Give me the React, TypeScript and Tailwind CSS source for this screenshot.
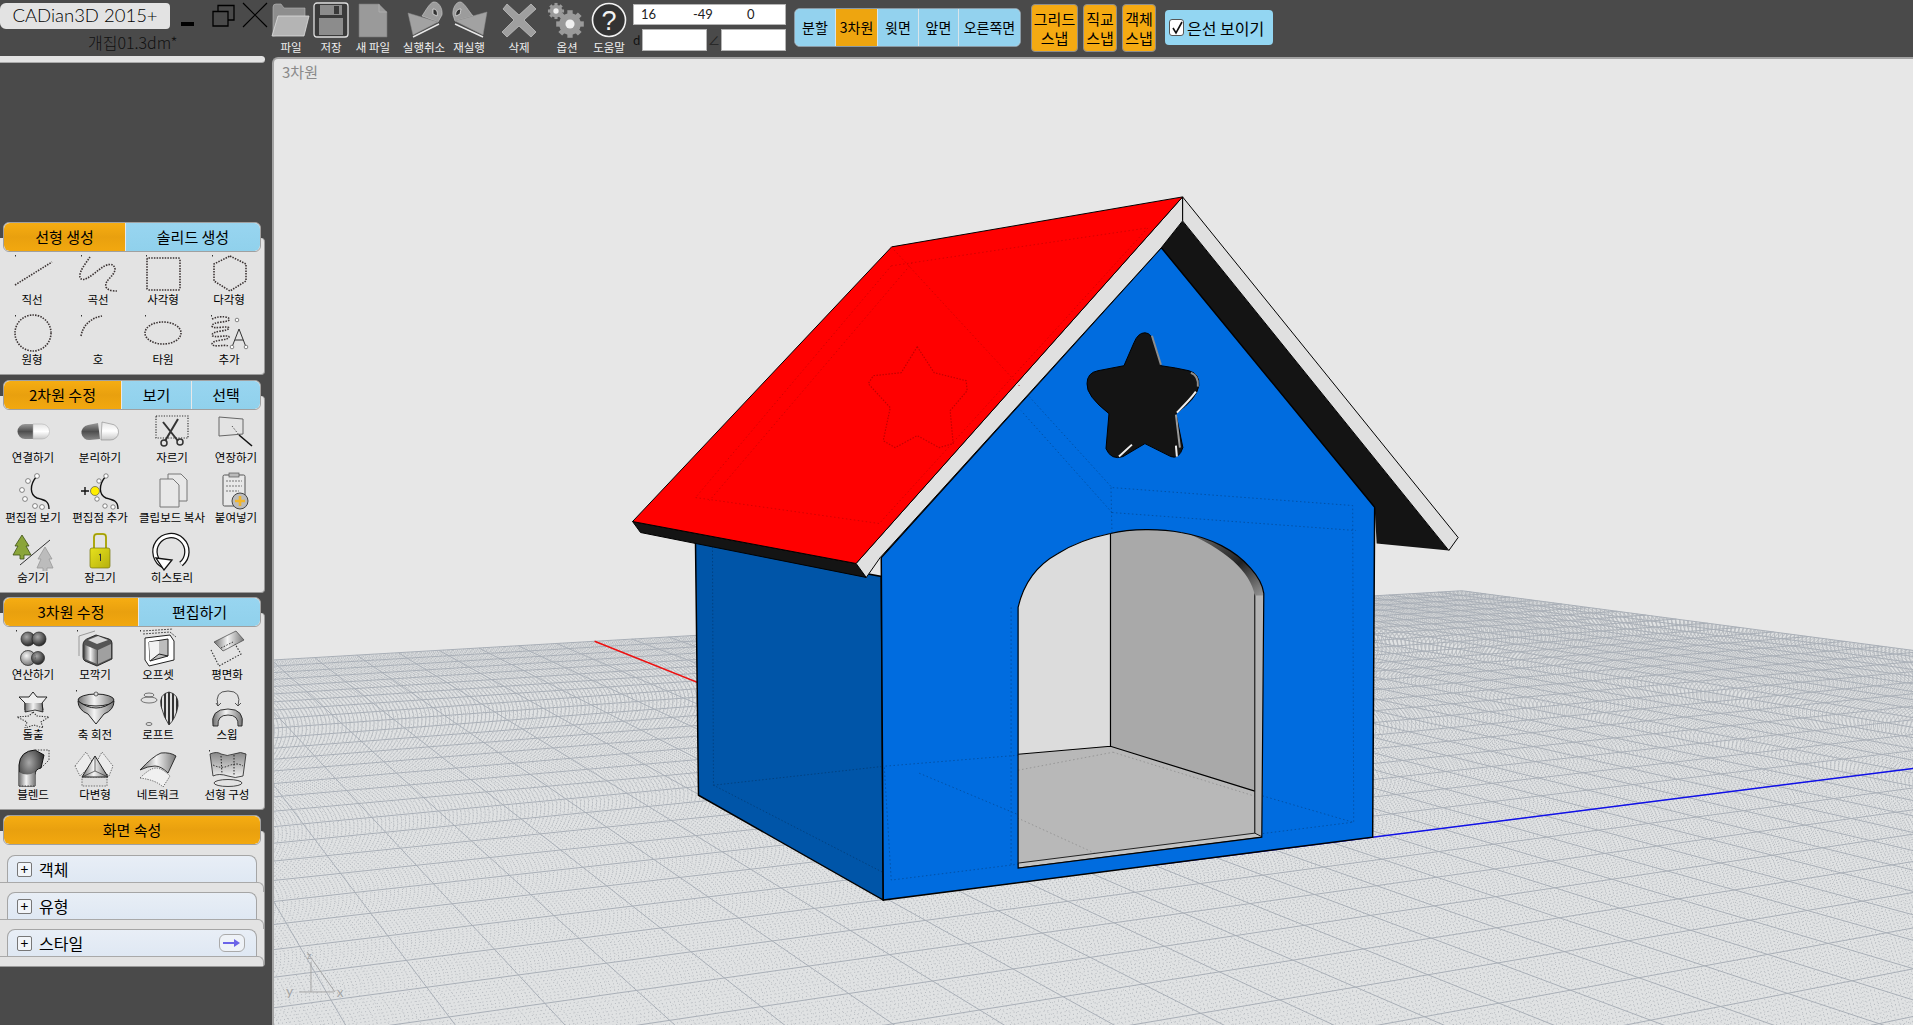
import type { ReactNode } from "react";

const O = [1153, 865];
const VA = [-24, 394];
const VB = [4865, 392];
const U = 29;
const V = 24;
const kB = U * 2.055;
const kA = V * 1.1018;

function project(u: number, v: number) {
  const a = u / kB;
  const b = v / kA;
  const w = 1 + a + b;
  return [(O[0] + a * VB[0] + b * VA[0]) / w, (O[1] + a * VB[1] + b * VA[1]) / w];
}

function seg(p: number[], q: number[]) {
  return `M${p[0].toFixed(1)} ${p[1].toFixed(1)}L${q[0].toFixed(1)} ${q[1].toFixed(1)}`;
}

function gridPath(step: number, skipMajor: boolean) {
  let d = "";
  const count = Math.round((U * 2) / step);
  for (let i = 0; i <= count; i++) {
    const u = -U + i * step;
    if (skipMajor && Math.abs(u - Math.round(u)) < 0.001) continue;
    const vMin = Math.max(-V, (0.3 - 1 - u / kB) * kA);
    if (vMin < V) d += seg(project(u, vMin), project(u, V));
  }
  const countV = Math.round((V * 2) / step);
  for (let i = 0; i <= countV; i++) {
    const v = -V + i * step;
    if (skipMajor && Math.abs(v - Math.round(v)) < 0.001) continue;
    const uMin = Math.max(-U, (0.3 - 1 - v / kA) * kB);
    if (uMin < U) d += seg(project(uMin, v), project(U, v));
  }
  return d;
}

function pts(list: number[][]) {
  return list.map((p) => p.join(",")).join(" ");
}

const STAR =
  "M1144 332Q1151 332 1154 345L1160 365Q1175 367 1188 370Q1199 373 1198 385Q1196 398 1175 413L1182 447Q1178 459 1170 456L1144 443L1122 456Q1110 460 1105 448L1108 413Q1085 395 1086 383Q1086 372 1097 370L1123 365L1133 342Q1137 332 1144 332Z";
const DOOR =
  "M1017 607C1022 585 1035 565 1057 553C1073 543 1090 537 1109.5 533C1130 528 1160 528 1180 532C1210 537 1235 550 1250 568C1258 577 1262 585 1263 593L1261 837L1017 868Z";

function Viewport() {
  const far = project(U, V);
  const left = project(-U, V);
  const right = project(U, -4);
  const redEnd = project(0, V);
  const blueEnd = project(U, 0);
  return (
    <svg viewBox="272 58 1641 967" className="block w-full h-full">
      <defs>
        <clipPath id="door">
          <path d={DOOR} />
        </clipPath>
        <linearGradient id="archLip" x1="0" y1="0" x2="1" y2="1">
          <stop offset="0" stopColor="#777" />
          <stop offset="0.6" stopColor="#222" />
          <stop offset="1" stopColor="#999" />
        </linearGradient>
      </defs>
      <polygon points={pts([far, left, [left[0], 1100], [2200, 1100], right])} fill="#e0e2e3" />
      <path d={gridPath(0.1, true)} stroke="#b6babf" strokeWidth="1" strokeDasharray="1 3" fill="none" />
      <path d={gridPath(1, false)} stroke="#a9afb7" strokeWidth="1" fill="none" />
      <path d={seg(redEnd, O)} stroke="#f01010" strokeWidth="1.5" />
      <path d={seg(O, blueEnd)} stroke="#1010e8" strokeWidth="1.5" />

      {/* side wall */}
      <polygon points="694,541 697,795 882,900 880,576" fill="#0055a8" stroke="#000" strokeWidth="1.5" />
      <path d="M711 543L712 785L883 873M712 785L883 766" stroke="#00386f" strokeWidth="0.7" strokeDasharray="1.5 2" fill="none" />

      {/* roof underside, right */}
      <polygon points="1181.7,220 1448.3,550 1376,543 1374,507 1160,247" fill="#141414" />
      <polygon points="1181.7,196 1457.6,537 1448.3,550 1181.7,220" fill="#e0e0e0" stroke="#000" strokeWidth="1" />

      {/* front wall */}
      <polygon points="1160.3,246.7 1374,506.7 1372,837 882,900 880,557" fill="#006cdf" stroke="#000" strokeWidth="1.5" />
      <path
        d="M1020 387L1111 487L1352 505L1353 822L890 880L883 766L1017 755M1111 512L1355 530M1110 487L1111 533M1112 752L1352 822M918 773L1109 853M1010 607L1010 867M1111 512L1020 410"
        stroke="#034a98"
        strokeWidth="0.8"
        strokeDasharray="1.5 2.5"
        fill="none"
      />

      {/* doorway */}
      <g clipPath="url(#door)">
        <rect x="1017" y="520" width="93" height="360" fill="#dcdcdc" />
        <rect x="1109.5" y="520" width="160" height="360" fill="#a9a9a9" />
        <polygon points="1017,754 1109.5,746 1254,791 1254,840 1017,870" fill="#b8b8b8" />
        <path d="M1017 754L1109.5 746L1254 791M1109.5 533L1109.5 746" stroke="#000" strokeWidth="1.2" fill="none" />
        <path d="M1112 752L1254 796M1017 770L1112 752M918 773L1109 860" stroke="#8e8e8e" strokeWidth="0.8" strokeDasharray="1.5 2.5" fill="none" />
        <rect x="1254" y="590" width="10" height="250" fill="#b4b4b4" />
        <path d="M1254 593L1254 835" stroke="#000" strokeWidth="1" />
        <polygon points="1017,863 1254,833 1262,837 1017,868" fill="#c4c4c4" stroke="#222" strokeWidth="1" />
        <path d="M1180 530C1212 537 1237 550 1252 568C1260 577 1264 585 1265 595L1254 595C1250 572 1225 548 1180 530Z" fill="url(#archLip)" />
      </g>
      <path d={DOOR} fill="none" stroke="#000" strokeWidth="1.2" />

      {/* star opening */}
      <path d={STAR} fill="#141414" stroke="#000" strokeWidth="1" />
      <path d="M1151 335L1160 364M1190 372Q1198 375 1197 386" stroke="#8d8d8d" strokeWidth="2" fill="none" />
      <path d="M1195 391Q1190 398 1176 412M1131 444L1118 456M1175 445L1176 456" stroke="#eeeeee" strokeWidth="2" fill="none" />
      <path d="M1175 414L1179 447" stroke="#999" strokeWidth="2" fill="none" />

      {/* roof */}
      <polygon points="631,521 639,532 865,577 854.8,563" fill="#141414" stroke="#000" strokeWidth="1" />
      <polygon points="1181.7,196 1181.7,220 1160.3,247 879,557 865,577 854.8,563" fill="#e0e0e0" stroke="#000" strokeWidth="1" />
      <polygon points="1181.7,196 890.4,246 631,521 854.8,563" fill="#ff0000" stroke="#000" strokeWidth="1" />
      <path
        d="M890 265L1147 227L878 523L694 497ZM911 262L708 500M890 246L1020 387"
        stroke="#c80000"
        strokeWidth="0.8"
        strokeDasharray="1.5 2.5"
        fill="none"
      />
      <path
        d="M916 346L933 372L965 380L966 390L949 410L952 443L938 447L916 435L894 447L882 440L889 407L867 383L872 375L900 372Z"
        stroke="#c00000"
        strokeWidth="1.2"
        strokeDasharray="1.5 1.5"
        strokeLinejoin="round"
        fill="none"
      />

      {/* axis gizmo */}
      <path d="M309 962L309 992M297 992L332 992M305 952L333 992" stroke="#a5a5a5" strokeWidth="1" fill="none" />
      <text x="284" y="996" fontSize="14" fill="#a5a5a5" fontFamily="Lato, sans-serif">y</text>
      <text x="335" y="997" fontSize="13" fill="#a5a5a5" fontFamily="Lato, sans-serif">x</text>
      <text x="305" y="959" fontSize="10" fill="#a5a5a5" fontFamily="Lato, sans-serif">z</text>
    </svg>
  );
}

function Icon({ children }: { children: ReactNode }) {
  return (
    <svg viewBox="0 0 60 40" className="block w-[60px] h-[40px] shrink-0">
      {children}
    </svg>
  );
}

function Dotted({ children }: { children: ReactNode }) {
  return (
    <g fill="none" stroke="#3c3434" strokeWidth="1.6" strokeDasharray="1.5 1.2">
      {children}
    </g>
  );
}

function Tick({ x, y }: { x: number; y: number }) {
  return <rect x={x} y={y} width="1" height="1.5" fill="#333" />;
}

function Sphere({ cx, cy, r, fill = "url(#gSphere)" }: { cx: number; cy: number; r: number; fill?: string }) {
  return <circle cx={cx} cy={cy} r={r} fill={fill} stroke="#222" strokeWidth="0.7" />;
}

const line2 = (
  <Icon>
    <Tick x={13} y={2} />
    <Dotted>
      <path d="M13 32L50 9" />
    </Dotted>
  </Icon>
);
const curve = (
  <Icon>
    <Tick x={13} y={2} />
    <Dotted>
      <path d="M22 4C18 10 11 18 12 24C14 31 24 22 32 16C38 11 46 9 47 16C47 23 36 27 38 34C40 38 46 38 49 38" />
    </Dotted>
  </Icon>
);
const rectIcon = (
  <Icon>
    <Tick x={13} y={2} />
    <Dotted>
      <rect x="14" y="5" width="33" height="32" rx="1.5" />
    </Dotted>
  </Icon>
);
const polygonIcon = (
  <Icon>
    <Tick x={13} y={2} />
    <Dotted>
      <polygon points="31,3 47,11 47,28 31,38 15,28 15,11" />
    </Dotted>
  </Icon>
);
const circleIcon = (
  <Icon>
    <Tick x={13} y={2} />
    <Dotted>
      <circle cx="31" cy="20" r="18" />
    </Dotted>
  </Icon>
);
const arcIcon = (
  <Icon>
    <Tick x={13} y={2} />
    <Dotted>
      <path d="M13 23C15 12 23 5 34 3" />
    </Dotted>
  </Icon>
);
const ellipseIcon = (
  <Icon>
    <Tick x={12} y={2} />
    <Dotted>
      <ellipse cx="30" cy="20" rx="18" ry="11" />
    </Dotted>
  </Icon>
);
const addIcon = (
  <Icon>
    <Tick x={12} y={2} />
    <Dotted>
      <path d="M13 6C22 2 32 4 30 7C27 10 14 8 13 13C14 17 29 12 30 15C29 19 14 17 13 22C14 26 29 21 30 24C29 28 14 26 13 31C14 35 26 31 29 33" />
    </Dotted>
    <path d="M40 16L33 34M40 16L47 34M36 27L44 27" stroke="#333" strokeWidth="1" fill="none" />
    <circle cx="38" cy="7" r="1.8" fill="#fff" stroke="#555" strokeWidth="0.7" />
    <circle cx="33" cy="34" r="1.8" fill="#fff" stroke="#555" strokeWidth="0.7" />
    <circle cx="47" cy="34" r="1.8" fill="#fff" stroke="#555" strokeWidth="0.7" />
  </Icon>
);

const joinIcon = (
  <Icon>
    <path d="M30 13L22 13A7.5 7.5 0 0 0 22 28L30 28Z" fill="url(#gPillDark)" />
    <path d="M30 13L39 13A7.5 7.5 0 0 1 39 28L30 28Z" fill="url(#gPillLight)" stroke="#aaa" strokeWidth="0.5" />
  </Icon>
);
const splitIcon = (
  <Icon>
    <path d="M28 12L18 14A7.5 7.5 0 0 0 20 29L30 28Z" fill="url(#gPillDark)" />
    <path d="M32 11L41 13A7.5 7.5 0 0 1 40 29L31 29Z" fill="url(#gPillLight)" stroke="#888" strokeWidth="0.6" />
  </Icon>
);
const cutIcon = (
  <Icon>
    <rect x="14" y="5" width="32" height="22" fill="none" stroke="#333" strokeWidth="1.2" strokeDasharray="1.2 1.4" />
    <path d="M36 8L23 30M21 11L36 30" stroke="#333" strokeWidth="2" fill="none" />
    <circle cx="22" cy="32" r="3" fill="none" stroke="#333" strokeWidth="1.5" />
    <circle cx="38" cy="31" r="3" fill="none" stroke="#333" strokeWidth="1.5" />
  </Icon>
);
const extendIcon = (
  <Icon>
    <path d="M13 6L37 8L37 23L13 25Z" fill="none" stroke="#666" strokeWidth="1" />
    <path d="M26 15L33 24" stroke="#555" strokeWidth="1" strokeDasharray="1.5 1.5" />
    <path d="M33 24L46 35" stroke="#111" strokeWidth="1.6" />
  </Icon>
);
const viewPtsIcon = (
  <Icon>
    <path d="M34 5C26 14 27 24 34 27C42 29 46 30 46 38" fill="none" stroke="#111" strokeWidth="1.4" />
    {[
      [34, 5],
      [25, 10],
      [19, 19],
      [22, 28],
      [32, 35],
      [39, 36],
    ].map(([cx, cy]) => (
      <circle key={cx} cx={cx} cy={cy} r="2.4" fill="#fff" stroke="#555" strokeWidth="0.7" />
    ))}
  </Icon>
);
const addPtIcon = (
  <Icon>
    <g transform="translate(2 0)">
      <path d="M34 5C26 14 27 24 34 27C42 29 46 30 46 38" fill="none" stroke="#111" strokeWidth="1.4" />
      {[
        [34, 5],
        [27, 10],
        [25, 28],
        [33, 35],
        [41, 36],
      ].map(([cx, cy]) => (
        <circle key={cx} cx={cx} cy={cy} r="2.2" fill="#fff" stroke="#555" strokeWidth="0.7" />
      ))}
    </g>
    <path d="M11 20L19 20M15 16L15 24" stroke="#111" strokeWidth="1.4" />
    <circle cx="25" cy="20" r="4.5" fill="#ffee00" stroke="#555" strokeWidth="0.7" />
  </Icon>
);
const copyIcon = (
  <Icon>
    <path d="M26 3L39 3L45 9L45 30L26 30Z" fill="#e8e8e8" stroke="#777" strokeWidth="1" />
    <path d="M18 8L31 8L37 14L37 36L18 36Z" fill="#e8e8e8" stroke="#777" strokeWidth="1" />
  </Icon>
);
const pasteIcon = (
  <Icon>
    <rect x="17" y="4" width="22" height="31" rx="1.5" fill="#e8e8e8" stroke="#555" strokeWidth="1" />
    <rect x="23" y="2" width="10" height="4" fill="#bbb" stroke="#555" strokeWidth="0.7" />
    <path d="M20 10L36 10M20 15L36 15M20 20L33 20" stroke="#777" strokeWidth="1" strokeDasharray="2 1" />
    <circle cx="34" cy="30" r="8" fill="#bbb" stroke="#444" strokeWidth="1" />
    <path d="M34 25L34 35M29 30L39 30" stroke="#f2b62b" strokeWidth="2.6" />
  </Icon>
);
const hideIcon = (
  <Icon>
    <polygon points="19,4 26,15 23,15 28,24 21,24 21,28 17,28 17,24 10,24 15,15 12,15" fill="#8aa53a" stroke="#3d5015" strokeWidth="0.8" />
    <polygon points="42,16 49,28 46,28 50,37 44,37 44,42 40,42 40,37 34,37 38,28 35,28" fill="#bcbcbc" stroke="#999" strokeWidth="0.8" />
    <path d="M17 34L47 9" stroke="#333" strokeWidth="1" />
  </Icon>
);
const lockIcon = (
  <Icon>
    <path d="M24 18L24 6Q24 3 27 3L33 3Q36 3 36 6L36 18" fill="none" stroke="#c2bd14" strokeWidth="2" />
    <path d="M24 18L24 6Q24 3 27 3L33 3Q36 3 36 6L36 18" fill="none" stroke="#6a6710" strokeWidth="0.5" />
    <rect x="20" y="17" width="20" height="20" rx="2" fill="url(#gLock)" stroke="#77750e" strokeWidth="0.7" />
    <path d="M29 24L30.5 23L30.5 30" stroke="#333" strokeWidth="1" fill="none" />
  </Icon>
);
const historyIcon = (
  <Icon>
    <path d="M22 35A16 16 0 1 1 39 33" fill="none" stroke="#111" strokeWidth="5.5" />
    <path d="M22 35A16 16 0 1 1 39 33" fill="none" stroke="#fff" strokeWidth="3" />
    <polygon points="14,27 30,29 22,39" fill="#fff" stroke="#111" strokeWidth="1.3" />
  </Icon>
);

const booleanIcon = (
  <Icon>
    <Tick x={13} y={2} />
    <Sphere cx={25} cy={11} r={7} fill="url(#gDarkSphere)" />
    <Sphere cx={36} cy={11} r={7} fill="url(#gDarkSphere)" />
    <Sphere cx={25} cy={30} r={7.5} />
    <Sphere cx={35} cy={30} r={6.5} fill="url(#gDarkSphere)" />
    <circle cx="25" cy="30" r="7.5" fill="none" stroke="#555" strokeWidth="0.6" strokeDasharray="1 1" />
  </Icon>
);
const filletIcon = (
  <Icon>
    <Tick x={12} y={2} />
    <path d="M14 8L30 3M14 8L14 28" stroke="#999" strokeWidth="1" fill="none" />
    <path d="M18 17Q18 12 24 10L31 7L44 11Q47 12 47 15L47 31L32 38L20 33Q18 32 18 29Z" fill="#555" stroke="#222" strokeWidth="0.9" />
    <path d="M20 17L32 22L32 36L20 31Z" fill="url(#gMetal)" />
    <path d="M33 22L46 16L46 30L33 36Z" fill="#a0a0a0" />
    <path d="M23 12L33 8L43 12L32 16Z" fill="#d8d8d8" />
  </Icon>
);
const offsetIcon = (
  <Icon>
    <Tick x={12} y={2} />
    <path d="M15 6L42 4M15 3L45 1M42 4L48 9" stroke="#555" strokeWidth="1" strokeDasharray="2 1" fill="none" />
    <polygon points="17,10 42,7 46,13 46,32 21,38 17,32" fill="#fff" stroke="#222" strokeWidth="1" />
    <polygon points="21,14 40,11 40,28 22,33" fill="#bdbdbd" stroke="#222" strokeWidth="1" />
    <polygon points="21,14 31,13 31,26 22,33" fill="#f2f2f2" />
    <path d="M22 33L31 26L40 28" stroke="#222" strokeWidth="1" fill="none" />
  </Icon>
);
const flattenIcon = (
  <Icon>
    <polygon points="17,14 39,3 47,12 26,23" fill="url(#gMetal)" stroke="#444" strokeWidth="0.7" />
    <path d="M14 22L22 38L44 26L38 16" stroke="#333" strokeWidth="1.1" strokeDasharray="1.5 1.5" fill="none" />
    <path d="M24 20L36 14" stroke="#333" strokeWidth="1" strokeDasharray="1.5 1.5" />
  </Icon>
);
const extrudeIcon = (
  <Icon>
    <polygon points="30,4 34,9 44,9 39,15 40,22 32,20 22,22 22,15 16,9 26,9" fill="#eee" stroke="#111" strokeWidth="0.9" />
    <path d="M22 15L22 24L32 22L40 24L39 15" fill="url(#gMetal)" stroke="#111" strokeWidth="0.8" />
    <polygon points="30,24 34,28 46,29 38,34 40,40 31,37 22,40 24,34 14,29 26,28" fill="none" stroke="#333" strokeWidth="1.1" strokeDasharray="1.3 1.3" />
  </Icon>
);
const revolveIcon = (
  <Icon>
    <Tick x={11} y={2} />
    <ellipse cx="31" cy="12" rx="18" ry="6" fill="url(#gMetal)" stroke="#222" strokeWidth="1" />
    <path d="M13 13Q13 22 23 26L31 36L39 26Q49 22 49 13Q40 20 31 20Q22 20 13 13Z" fill="url(#gMetal)" stroke="#222" strokeWidth="1" />
    <circle cx="31" cy="6" r="2" fill="#ddd" stroke="#333" strokeWidth="0.7" />
  </Icon>
);
const loftIcon = (
  <Icon>
    <ellipse cx="21" cy="7" rx="5" ry="2" fill="none" stroke="#555" strokeWidth="0.8" />
    <ellipse cx="21" cy="12" rx="8" ry="3" fill="none" stroke="#555" strokeWidth="0.8" />
    <ellipse cx="21" cy="36" rx="3" ry="1.5" fill="none" stroke="#555" strokeWidth="0.8" />
    <path d="M41 4Q51 6 50 18Q48 30 41 37Q36 30 33 18Q31 6 41 4Z" fill="url(#gStripes)" stroke="#222" strokeWidth="0.8" />
  </Icon>
);
const sweepIcon = (
  <Icon>
    <path d="M21 18Q17 3 31 3Q45 3 41 18" fill="none" stroke="#444" strokeWidth="0.9" />
    <path d="M19 15L21 18L24 15M38 15L41 18L44 15" fill="none" stroke="#444" strokeWidth="0.9" />
    <path d="M16 38Q13 21 31 21Q48 21 45 38L41 38Q42 27 31 27Q20 27 21 38Z" fill="url(#gMetal)" stroke="#222" strokeWidth="0.9" />
  </Icon>
);
const blendIcon = (
  <Icon>
    <path d="M16 38L16 17Q17 3 32 2L41 7L38 20Q32 21 32 27L32 38Z" fill="url(#gDarkSphere)" stroke="#111" strokeWidth="1" />
    <path d="M16 24Q24 29 32 24L32 38L16 38Z" fill="url(#gMetal)" />
    <path d="M32 2L46 2L46 12L38 20" fill="none" stroke="#444" strokeWidth="1" strokeDasharray="1.5 1.3" />
    <path d="M16 38L32 38" stroke="#444" strokeDasharray="1.5 1.3" />
  </Icon>
);
const patchIcon = (
  <Icon>
    <polygon points="10,18 21,4 28,15 15,28" fill="#ececec" stroke="#555" strokeWidth="0.8" strokeDasharray="1.5 1.2" />
    <polygon points="48,18 37,4 31,15 44,28" fill="#ececec" stroke="#555" strokeWidth="0.8" strokeDasharray="1.5 1.2" />
    <rect x="17" y="29" width="25" height="9" fill="#ddd" stroke="#555" strokeWidth="0.8" strokeDasharray="1.5 1.2" />
    <polygon points="30,8 43,29 17,29" fill="url(#gMetal)" stroke="#222" strokeWidth="1" />
    <path d="M30 8L30 23L17 29M30 23L43 29" stroke="#333" strokeWidth="0.7" fill="none" />
  </Icon>
);
const networkIcon = (
  <Icon>
    <path d="M12 22Q25 8 33 5Q42 4 48 8L40 25Q33 18 27 18Q20 18 12 22Z" fill="url(#gMetal)" stroke="#222" strokeWidth="0.9" />
    <path d="M12 30Q22 20 28 20Q34 20 42 28L35 39Q28 32 12 30Z" fill="#f0f0f0" stroke="#444" strokeWidth="0.8" strokeDasharray="1.3 1.2" />
  </Icon>
);
const surfaceIcon = (
  <Icon>
    <Tick x={12} y={2} />
    <path d="M13 6Q20 3 24 6Q30 9 37 6Q44 3 49 6L46 28Q38 31 31 28Q22 25 16 28Z" fill="url(#gSheet)" stroke="#333" strokeWidth="0.9" />
    <path d="M16 17Q24 21 31 18Q40 14 46 18" stroke="#222" strokeWidth="1" strokeDasharray="1.5 1.5" fill="none" />
    <path d="M24 8L25 26M37 7L37 28" stroke="#222" strokeWidth="1" strokeDasharray="1.5 1.5" />
    <ellipse cx="31" cy="35" rx="14" ry="3.5" fill="none" stroke="#333" strokeWidth="0.9" />
  </Icon>
);

type Tool = { label: string; icon: ReactNode };

const drawTools: Tool[] = [
  { label: "직선", icon: line2 },
  { label: "곡선", icon: curve },
  { label: "사각형", icon: rectIcon },
  { label: "다각형", icon: polygonIcon },
  { label: "원형", icon: circleIcon },
  { label: "호", icon: arcIcon },
  { label: "타원", icon: ellipseIcon },
  { label: "추가", icon: addIcon },
];

const editTools: Tool[] = [
  { label: "연결하기", icon: joinIcon },
  { label: "분리하기", icon: splitIcon },
  { label: "자르기", icon: cutIcon },
  { label: "연장하기", icon: extendIcon },
  { label: "편집점 보기", icon: viewPtsIcon },
  { label: "편집점 추가", icon: addPtIcon },
  { label: "클립보드 복사", icon: copyIcon },
  { label: "붙여넣기", icon: pasteIcon },
  { label: "숨기기", icon: hideIcon },
  { label: "잠그기", icon: lockIcon },
  { label: "히스토리", icon: historyIcon },
];

const solidTools: Tool[] = [
  { label: "연산하기", icon: booleanIcon },
  { label: "모깍기", icon: filletIcon },
  { label: "오프셋", icon: offsetIcon },
  { label: "평면화", icon: flattenIcon },
  { label: "돌출", icon: extrudeIcon },
  { label: "축 회전", icon: revolveIcon },
  { label: "로프트", icon: loftIcon },
  { label: "스윕", icon: sweepIcon },
  { label: "블렌드", icon: blendIcon },
  { label: "다변형", icon: patchIcon },
  { label: "네트워크", icon: networkIcon },
  { label: "선형 구성", icon: surfaceIcon },
];

function ToolGrid({ tools, cols }: { tools: Tool[]; cols: string }) {
  return (
    <div className={`grid ${cols} w-[264px]`}>
      {tools.map((t) => (
        <div key={t.label} className="h-[60px] flex flex-col items-center">
          {t.icon}
          <span className="text-[11.5px] leading-[13px] text-black whitespace-nowrap">{t.label}</span>
        </div>
      ))}
    </div>
  );
}

function Tab({ label, active, width }: { label: string; active?: boolean; width: string }) {
  return (
    <div
      className={`${width} h-full flex items-center justify-center text-[15px] text-black first:rounded-l-md last:rounded-r-md ${
        active
          ? "bg-gradient-to-b from-[#f6ad12] via-[#e9a00e] to-[#f2a80f]"
          : "bg-gradient-to-b from-[#98d5f0] to-[#90d1ec]"
      }`}
    >
      {label}
    </div>
  );
}

function TabRow({ children }: { children: ReactNode }) {
  return (
    <div className="relative z-10 ml-[3px] w-[258px] h-[30px] flex gap-px rounded-md border border-[#a0a0a0] bg-[#e8e8e8] overflow-hidden">
      {children}
    </div>
  );
}

function PanelBody({ children }: { children: ReactNode }) {
  return (
    <div className="w-[265px] -mt-[14px] pt-[15px] pb-px bg-[#e3e3e3] border-r border-b border-[#9b9b9b] rounded-r-sm">
      {children}
    </div>
  );
}

function PropertyRow({ label, action }: { label: string; action?: boolean }) {
  return (
    <>
      <div className="ml-[7px] w-[250px] h-[27px] flex items-center gap-[7px] pl-[9px] pr-[11px] rounded-t-lg border border-b-0 border-[#a5a5a5] bg-gradient-to-b from-[#e8eef6] to-[#dfe8f3]">
        <span className="w-[15px] h-[15px] flex items-center justify-center border border-[#777] rounded-[2px] bg-[#f2f5f9] text-[14px] leading-none text-black">
          +
        </span>
        <span className="text-[16px] leading-[20px] text-black">{label}</span>
        {action && (
          <span className="ml-auto w-[26px] h-[18px] flex items-center justify-center rounded-md border border-[#aaa] bg-[#eef2f7]">
            <svg viewBox="0 0 18 10" className="w-[18px] h-[10px]">
              <path d="M0 4L11 4L11 1L17 5L11 9L11 6L0 6Z" fill="#6a63e8" />
            </svg>
          </span>
        )}
      </div>
      <div className="h-[10px] rounded-tr-md border-t border-r border-[#a9a9a9] bg-[#e3e3e3]" />
    </>
  );
}

function Sidebar() {
  return (
    <aside className="w-[272px] shrink-0 flex flex-col">
      <div className="h-[56px] relative">
        <div className="flex items-start pt-[3px]">
          <div className="w-[170px] h-[26px] flex items-center justify-center rounded-r-sm rounded-l-md bg-[#e3e3e3] font-['Lato',sans-serif] font-light text-[18.5px] text-black">
            CADian3D 2015+
          </div>
          <svg viewBox="0 0 100 30" className="w-[100px] h-[30px] ml-[2px] -mt-[3px]">
            <rect x="9" y="22" width="13" height="4" fill="#000" />
            <path d="M41 11.5L56 11.5L56 26L41 26ZM46 11L46 5.5L62 5.5L62 20L56 20" fill="none" stroke="#000" strokeWidth="1.3" />
            <path d="M71 3L95 27M95 3L71 27" stroke="#000" strokeWidth="1.2" />
          </svg>
        </div>
        <div className="pl-[88px] mt-[3px] text-[16px] leading-[18px] text-[#111] font-light">개집01.3dm*</div>
      </div>
      <div className="w-[265px] h-[7px] rounded-r-sm bg-[#e3e3e3] border-b border-[#aaa]" />

      <div className="mt-[159px]">
        <TabRow>
          <Tab label="선형 생성" active width="w-[121px]" />
          <Tab label="솔리드 생성" width="flex-1" />
        </TabRow>
        <PanelBody>
          <ToolGrid tools={drawTools} cols="grid-cols-[64px_68px_62px_70px]" />
        </PanelBody>
      </div>

      <div className="mt-[5px]">
        <TabRow>
          <Tab label="2차원 수정" active width="w-[117px]" />
          <Tab label="보기" width="w-[69px]" />
          <Tab label="선택" width="flex-1" />
        </TabRow>
        <PanelBody>
          <ToolGrid tools={editTools} cols="grid-cols-[66px_68px_76px_52px]" />
        </PanelBody>
      </div>

      <div className="mt-[4px]">
        <TabRow>
          <Tab label="3차원 수정" active width="w-[134px]" />
          <Tab label="편집하기" width="flex-1" />
        </TabRow>
        <PanelBody>
          <ToolGrid tools={solidTools} cols="grid-cols-[66px_58px_68px_70px]" />
        </PanelBody>
      </div>

      <div className="mt-[5px]">
        <TabRow>
          <Tab label="화면 속성" active width="flex-1" />
        </TabRow>
        <div className="w-[265px] -mt-[14px] pt-[24px] bg-[#e3e3e3] border-r border-b border-[#9b9b9b] rounded-r-sm">
          <PropertyRow label="객체" />
          <PropertyRow label="유형" />
          <PropertyRow label="스타일" action />
        </div>
      </div>
    </aside>
  );
}

function TopTool({ label, className, children }: { label: string; className: string; children: ReactNode }) {
  return (
    <div className={`${className} h-[57px] flex flex-col items-center shrink-0`}>
      <svg viewBox="0 0 44 38" className="block w-[44px] h-[38px] mt-[1px] shrink-0">
        {children}
      </svg>
      <span className="text-[11.5px] leading-[14px] mt-[1px] text-[#f0f0f0] whitespace-nowrap">{label}</span>
    </div>
  );
}

function Gear({ cx, cy, r }: { cx: number; cy: number; r: number }) {
  const teeth = [0, 45, 90, 135];
  return (
    <g>
      {teeth.map((a) => (
        <rect
          key={a}
          x={cx - r * 0.22}
          y={cy - r * 1.15}
          width={r * 0.44}
          height={r * 2.3}
          fill="#9a9a9a"
          transform={`rotate(${a} ${cx} ${cy})`}
        />
      ))}
      <circle cx={cx} cy={cy} r={r * 0.9} fill="#9a9a9a" />
      <circle cx={cx} cy={cy} r={r * 0.38} fill="#f0f0f0" />
    </g>
  );
}

function Toolbar() {
  return (
    <div className="h-[57px] flex items-start shrink-0">
      <TopTool label="파일" className="w-[38px]">
        <path d="M4 6Q4 3 7 3L12 3L15 7L36 7L36 30L4 35Z" fill="#8e8e8e" stroke="#bbb" strokeWidth="0.6" />
        <path d="M9 15L40 15L35 35L3 35Z" fill="#b4b4b4" stroke="#ddd" strokeWidth="0.8" />
      </TopTool>
      <TopTool label="저장" className="w-[42px]">
        <rect x="5" y="2" width="34" height="34" rx="3" fill="#3a3a3a" stroke="#e0e0e0" strokeWidth="1.3" />
        <rect x="11" y="4" width="22" height="10" fill="#8c8c8c" />
        <rect x="25" y="5" width="5" height="8" fill="#3a3a3a" />
        <rect x="10" y="17" width="24" height="17" fill="#8c8c8c" />
      </TopTool>
      <TopTool label="새 파일" className="w-[42px]">
        <path d="M8 3L28 3L36 11L36 36L8 36Z" fill="#9a9a9a" stroke="#777" strokeWidth="0.6" />
        <path d="M28 3L28 11L36 11" fill="none" stroke="#bbb" strokeWidth="0.6" />
      </TopTool>
      <TopTool label="실행취소" className="w-[60px]">
        <path d="M20 15C24 9 27 3 31 1C37 0 41 8 40 14L36 21Z" fill="#9c9c9c" stroke="#ddd" strokeWidth="0.5" />
        <path d="M31 8C35 8 36 12 35 15L31 13Z" fill="#333" stroke="#eee" strokeWidth="0.7" />
        <polygon points="6,12 36,21 11,34" fill="#a2a2a2" stroke="#8a8a8a" strokeWidth="0.5" />
        <path d="M11 36L37 23" stroke="#e8e8e8" strokeWidth="1.5" />
      </TopTool>
      <TopTool label="재실행" className="w-[30px]">
        <path d="M26 15C21 9 18 3 14 1C9 0 5 8 6 14L8 20Z" fill="#9c9c9c" stroke="#ddd" strokeWidth="0.5" />
        <path d="M14 8C10 8 8 11 9 15L13 13Z" fill="#333" stroke="#eee" strokeWidth="0.7" />
        <polygon points="40,11 8,20 36,34" fill="#a2a2a2" stroke="#8a8a8a" strokeWidth="0.5" />
        <path d="M36 36L8 23" stroke="#e8e8e8" strokeWidth="1.5" />
      </TopTool>
      <TopTool label="삭제" className="w-[70px]">
        <path d="M6 8L10 3L22 14L34 3L39 8L27 19L39 31L34 36L22 25L10 36L5 31L17 19Z" fill="#9f9f9f" stroke="#c8c8c8" strokeWidth="0.7" />
      </TopTool>
      <TopTool label="옵션" className="w-[26px]">
        <Gear cx={11} cy={10} r={7} />
        <Gear cx={25} cy={23} r={12} />
      </TopTool>
      <TopTool label="도움말" className="w-[38px] ml-[10px]">
        <circle cx="22" cy="19" r="16.5" fill="#333" stroke="#f2f2f2" strokeWidth="1.6" />
        <text x="22" y="29" textAnchor="middle" fontSize="27" fill="#f2f2f2" fontFamily="Liberation Sans, sans-serif">
          ?
        </text>
      </TopTool>

      <div className="ml-[5px] w-[153px] pt-[4px] shrink-0">
        <div className="h-[21px] flex items-center pl-[7px] bg-white border border-[#b5b5b5] font-['Lato',sans-serif] text-[13px] text-[#222]">
          <span className="w-[52px]">16</span>
          <span className="w-[54px]">-49</span>
          <span>0</span>
        </div>
        <div className="mt-[4px] h-[22px] flex items-center">
          <span className="w-[9px] text-[12px] leading-none text-[#111]">d</span>
          <span className="w-[65px] h-full bg-white border border-[#b5b5b5]" />
          <span className="w-[14px] text-center text-[12px] text-[#222]">∠</span>
          <span className="w-[65px] h-full bg-white border border-[#b5b5b5]" />
        </div>
      </div>

      <div className="ml-[8px] mt-[8px] w-[227px] h-[39px] flex gap-px rounded-md overflow-hidden border border-[#8a9aa5] bg-[#d8e4ea] text-[14px] text-black shrink-0">
        <span className="w-[40px] flex items-center justify-center bg-[#93d2ee]">분할</span>
        <span className="w-[41px] flex items-center justify-center bg-[#eea50f]">3차원</span>
        <span className="w-[40px] flex items-center justify-center bg-[#93d2ee]">윗면</span>
        <span className="w-[39px] flex items-center justify-center bg-[#93d2ee]">앞면</span>
        <span className="flex-1 flex items-center justify-center bg-[#93d2ee] whitespace-nowrap">오른쪽면</span>
      </div>

      <div className="ml-[10px] mt-[4px] flex gap-[5px] shrink-0">
        <span className="w-[47px] h-[48px] flex items-center justify-center text-center leading-[19px] text-[15px] text-black rounded bg-[#f5aa12] border border-[#8d8d8d]">
          그리드
          <br />
          스냅
        </span>
        <span className="w-[34px] h-[48px] flex items-center justify-center text-center leading-[19px] text-[15px] text-black rounded bg-[#f5aa12] border border-[#8d8d8d]">
          직교
          <br />
          스냅
        </span>
        <span className="w-[34px] h-[48px] flex items-center justify-center text-center leading-[19px] text-[15px] text-black rounded bg-[#f5aa12] border border-[#8d8d8d]">
          객체
          <br />
          스냅
        </span>
      </div>

      <div className="ml-[9px] mt-[10px] w-[108px] h-[35px] flex items-center gap-[3px] pl-[4px] rounded bg-[#93d6f2] text-[16px] text-black shrink-0 whitespace-nowrap">
        <span className="w-[15px] h-[17px] shrink-0 flex items-center justify-center bg-white border border-[#555] rounded-[3px]">
          <svg viewBox="0 0 12 14" className="w-[12px] h-[14px]">
            <path d="M2 7L5 12L11 1" fill="none" stroke="#111" strokeWidth="1.6" />
          </svg>
        </span>
        은선 보이기
      </div>
    </div>
  );
}

export default function App() {
  return (
    <div className="w-[1913px] h-[1025px] overflow-hidden flex bg-[#4a4a4a] font-['Noto_Sans_CJK_KR',sans-serif]">
      <svg className="w-0 h-0 block shrink-0">
        <defs>
          <linearGradient id="gPillDark" x1="0" y1="0" x2="0" y2="1">
            <stop offset="0" stopColor="#9a9a9a" />
            <stop offset="0.5" stopColor="#4e4e4e" />
            <stop offset="1" stopColor="#888" />
          </linearGradient>
          <linearGradient id="gPillLight" x1="0" y1="0" x2="0" y2="1">
            <stop offset="0" stopColor="#e4e4e4" />
            <stop offset="0.5" stopColor="#ffffff" />
            <stop offset="1" stopColor="#c8c8c8" />
          </linearGradient>
          <linearGradient id="gLock" x1="0" y1="0" x2="1" y2="1">
            <stop offset="0" stopColor="#e8e21c" />
            <stop offset="1" stopColor="#b5b00e" />
          </linearGradient>
          <radialGradient id="gSphere" cx="0.4" cy="0.35" r="0.7">
            <stop offset="0" stopColor="#f5f5f5" />
            <stop offset="1" stopColor="#6c6c6c" />
          </radialGradient>
          <radialGradient id="gDarkSphere" cx="0.4" cy="0.35" r="0.7">
            <stop offset="0" stopColor="#a8a8a8" />
            <stop offset="1" stopColor="#1f1f1f" />
          </radialGradient>
          <linearGradient id="gMetal" x1="0" y1="0" x2="1" y2="0">
            <stop offset="0" stopColor="#6f6f6f" />
            <stop offset="0.45" stopColor="#f4f4f4" />
            <stop offset="1" stopColor="#777" />
          </linearGradient>
          <linearGradient id="gSheet" x1="0" y1="0" x2="0" y2="1">
            <stop offset="0" stopColor="#888" />
            <stop offset="1" stopColor="#f0f0f0" />
          </linearGradient>
          <pattern id="gStripes" width="4" height="10" patternUnits="userSpaceOnUse">
            <rect width="4" height="10" fill="#e0e0e0" />
            <rect width="2" height="10" fill="#333" />
          </pattern>
        </defs>
      </svg>
      <Sidebar />
      <main className="flex-1 min-w-0 flex flex-col">
        <Toolbar />
        <div className="relative flex-1 min-h-0 bg-[#e7e7e7] border-l-2 border-t-2 border-[#a3a3a3] rounded-tl-md overflow-hidden">
          <Viewport />
          <span className="absolute left-[8px] top-[2px] text-[15px] text-[#8a8a8a]">3차원</span>
        </div>
      </main>
    </div>
  );
}
